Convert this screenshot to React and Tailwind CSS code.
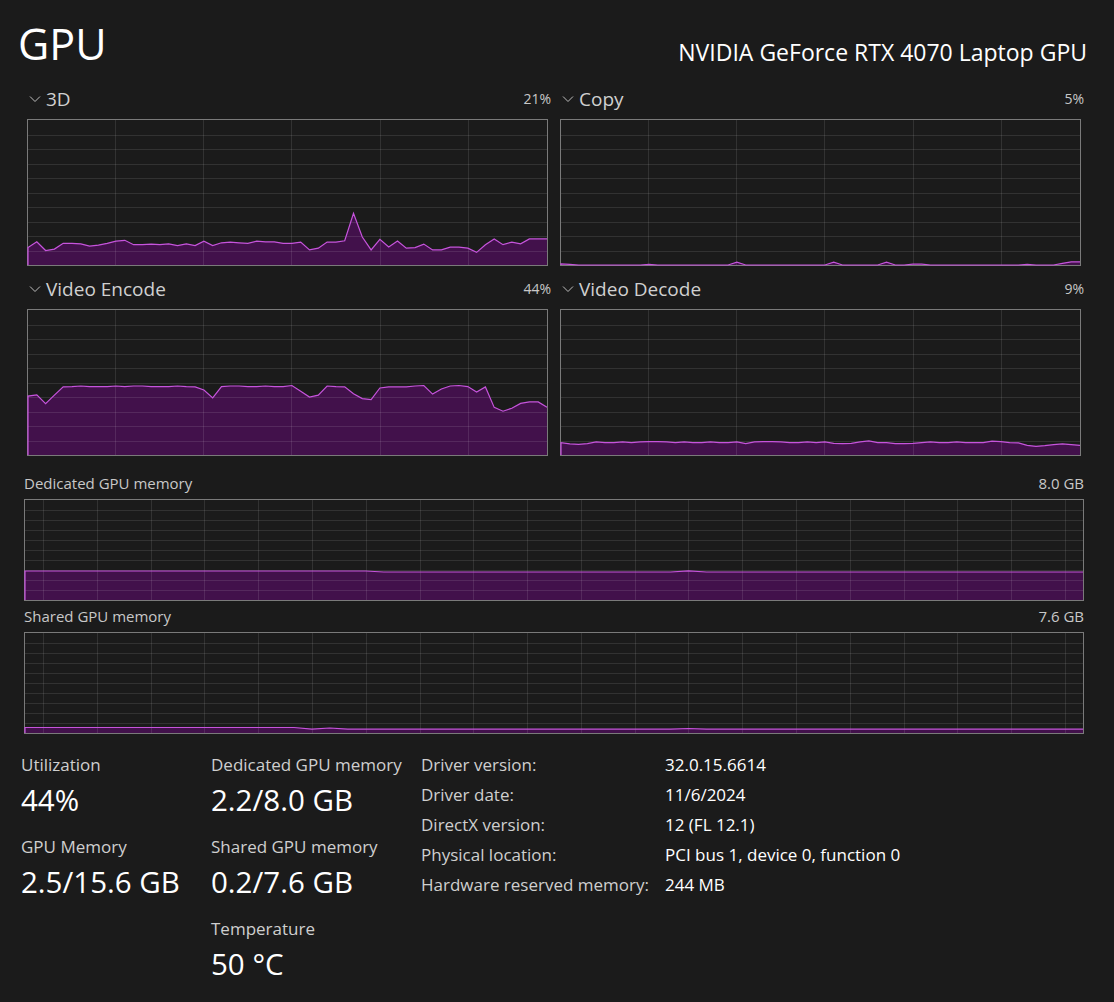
import React from 'react';

const FONT = { fontFamily: '"Segoe UI", "Open Sans", "Noto Sans", sans-serif' };

const threeD = [12,16,10,11,15,15,14.6,13,13.7,15,16.5,17,14,14,14.4,14,14.6,13.4,14.6,13.4,16.5,13.4,15.3,15.8,15.3,14.9,16.5,16,16,14.9,15,15.8,10.4,11.6,15.8,15.8,16.7,35.6,19.3,10.4,17.7,12.5,16.5,11.6,12,14.4,10.4,10.4,12.3,12.3,11.6,8.7,14,18,14,15.8,14.6,18,18,18];

const copy = Array.from({ length: 60 }, (_, i) => {
  const bumps = { 0: 0.8, 1: 0.5, 10: 0.5, 20: 2, 31: 2, 37: 2, 40: 0.6, 41: 0.6, 53: 0.5, 57: 1.2, 58: 2.2, 59: 2.2 };
  return bumps[i] || 0;
});

const encode = [40.6,41.5,35.4,41.3,47,47.2,47.6,47.2,47.2,47.2,47.6,47.2,47.6,47.6,47.2,47.2,47.2,47.6,47.2,47,44.8,39.4,47.2,47.6,47.6,47.2,47.2,47.6,47.2,47.2,47.9,44,39.9,41.3,47.6,47.2,47,42.2,38.9,38.2,46.2,47,47,47,47.6,47.9,42,45.5,47.6,47.9,47.2,43.4,47,32.8,30.2,32.3,35.6,36.6,36.6,33];

const decode = [40,44,45,43,38,40,40,38,40,38,37,37,38,40,38,40,40,38,40,40,38,43,38,37,37,38,40,40,38,40,38,42,43,42,38,35,40,40,43,43,42,40,38,40,40,38,40,40,40,36,37,40,41,48,51,49,46,44,46,48].map((y) => (77 - y) / 4.32);

const dedicated = Array.from({ length: 60 }, (_, i) => (i < 20 ? 29 : i === 37 ? 29.2 : 28));
const shared = Array.from({ length: 60 }, (_, i) => (i < 16 ? 5.5 : i === 17 ? 5 : i === 37 ? 4.5 : 3.8));

function Graph({ w, h, data, colStep, colOffset }) {
  const iw = w - 2;
  const ih = h - 2;
  const pts = data.map((v, i) => [1 + (i * iw) / (data.length - 1), h - 1 - (v / 100) * ih]);
  const line = pts.map(([x, y]) => `${x.toFixed(1)},${y.toFixed(1)}`).join(' ');
  const cols = [];
  for (let x = colOffset; x < w - 1; x += colStep) cols.push(Math.round(x) + 0.5);
  const rows = [];
  for (let r = 1; r < 10; r++) rows.push(Math.round(1 + (r * ih) / 10) + 0.5);

  return (
    <svg width={w} height={h} className="block">
      <polygon points={`1,${h - 1} ${line} ${w - 1},${h - 1}`} fill="#42114b" />
      {cols.map((x) => (
        <line key={'c' + x} x1={x} y1={1} x2={x} y2={h - 1} stroke="rgba(255,255,255,0.1)" />
      ))}
      {rows.map((y) => (
        <line key={'r' + y} x1={1} y1={y} x2={w - 1} y2={y} stroke="rgba(255,255,255,0.1)" />
      ))}
      <rect x={0.5} y={0.5} width={w - 1} height={h - 1} fill="none" stroke="#7a7a7a" />
      <polyline points={`1,${h - 1} ${line}`} fill="none" stroke="#c654dc" strokeWidth="1.2" />
    </svg>
  );
}

function Chevron() {
  return (
    <svg width="12" height="8" viewBox="0 0 12 8" className="mr-[5px]">
      <polyline points="1,1.5 6,6.5 11,1.5" fill="none" stroke="#bdbdbd" strokeWidth="1" />
    </svg>
  );
}

function EngineGraph({ name, pct, data }) {
  return (
    <div className="flex flex-col">
      <div className="flex items-center justify-between h-[20px] mb-[10px]">
        <div className="flex items-center pl-[2px]">
          <Chevron />
          <span className="text-[19px] text-[#d0d0d0] leading-none">{name}</span>
        </div>
        <span className="text-[14px] text-[#c8c8c8] leading-none">{pct}</span>
      </div>
      <Graph w={521} h={147} data={data} colStep={88.2} colOffset={88} />
    </div>
  );
}

function MemoryGraph({ name, max, data }) {
  return (
    <div className="flex flex-col">
      <div className="flex items-center justify-between h-[18px] mb-[7px]">
        <span className="text-[15px] text-[#c8c8c8] leading-none">{name}</span>
        <span className="text-[15px] text-[#c8c8c8] leading-none">{max}</span>
      </div>
      <Graph w={1060} h={102} data={data} colStep={53.79} colOffset={19} />
    </div>
  );
}

function Stat({ label, value }) {
  return (
    <div className="flex flex-col h-[82px]">
      <span className="text-[17px] text-[#cfcfcf] leading-[16px] mt-[1px]">{label}</span>
      <span className="text-[29.5px] text-white leading-[28px] mt-[13px]">{value}</span>
    </div>
  );
}

const info = [
  ['Driver version:', '32.0.15.6614'],
  ['Driver date:', '11/6/2024'],
  ['DirectX version:', '12 (FL 12.1)'],
  ['Physical location:', 'PCI bus 1, device 0, function 0'],
  ['Hardware reserved memory:', '244 MB'],
];

export default function App() {
  return (
    <div className="w-[1114px] h-[1002px] bg-[#1b1b1b] overflow-hidden" style={FONT}>
      <div className="flex items-end justify-between pl-[18px] pr-[27px] h-[70px]">
        <span className="text-[43px] text-white leading-none mb-[5px]">GPU</span>
        <span className="text-[23px] text-white leading-none mb-[6px]">NVIDIA GeForce RTX 4070 Laptop GPU</span>
      </div>

      <div className="grid grid-cols-2 gap-x-[9px] gap-y-[13px] pl-[27px] pr-[30px] mt-[19px]">
        <EngineGraph name="3D" pct="21%" data={threeD} />
        <EngineGraph name="Copy" pct="5%" data={copy} />
        <EngineGraph name="Video Encode" pct="44%" data={encode} />
        <EngineGraph name="Video Decode" pct="9%" data={decode} />
      </div>

      <div className="flex flex-col gap-[6px] pl-[24px] pr-[30px] mt-[18px]">
        <MemoryGraph name="Dedicated GPU memory" max="8.0 GB" data={dedicated} />
        <MemoryGraph name="Shared GPU memory" max="7.6 GB" data={shared} />
      </div>

      <div className="flex pl-[21px] mt-[22px]">
        <div className="w-[190px] flex flex-col">
          <Stat label="Utilization" value="44%" />
          <Stat label="GPU Memory" value="2.5/15.6 GB" />
        </div>
        <div className="w-[210px] flex flex-col">
          <Stat label="Dedicated GPU memory" value="2.2/8.0 GB" />
          <Stat label="Shared GPU memory" value="0.2/7.6 GB" />
          <Stat label="Temperature" value="50 °C" />
        </div>
        <div className="flex flex-col">
          {info.map(([k, v]) => (
            <div key={k} className="flex h-[30px] items-start">
              <span className="w-[244px] text-[17px] text-[#cfcfcf] leading-[16px] mt-[1px]">{k}</span>
              <span className="text-[17px] text-white leading-[16px] mt-[1px]">{v}</span>
            </div>
          ))}
        </div>
      </div>
    </div>
  );
}
